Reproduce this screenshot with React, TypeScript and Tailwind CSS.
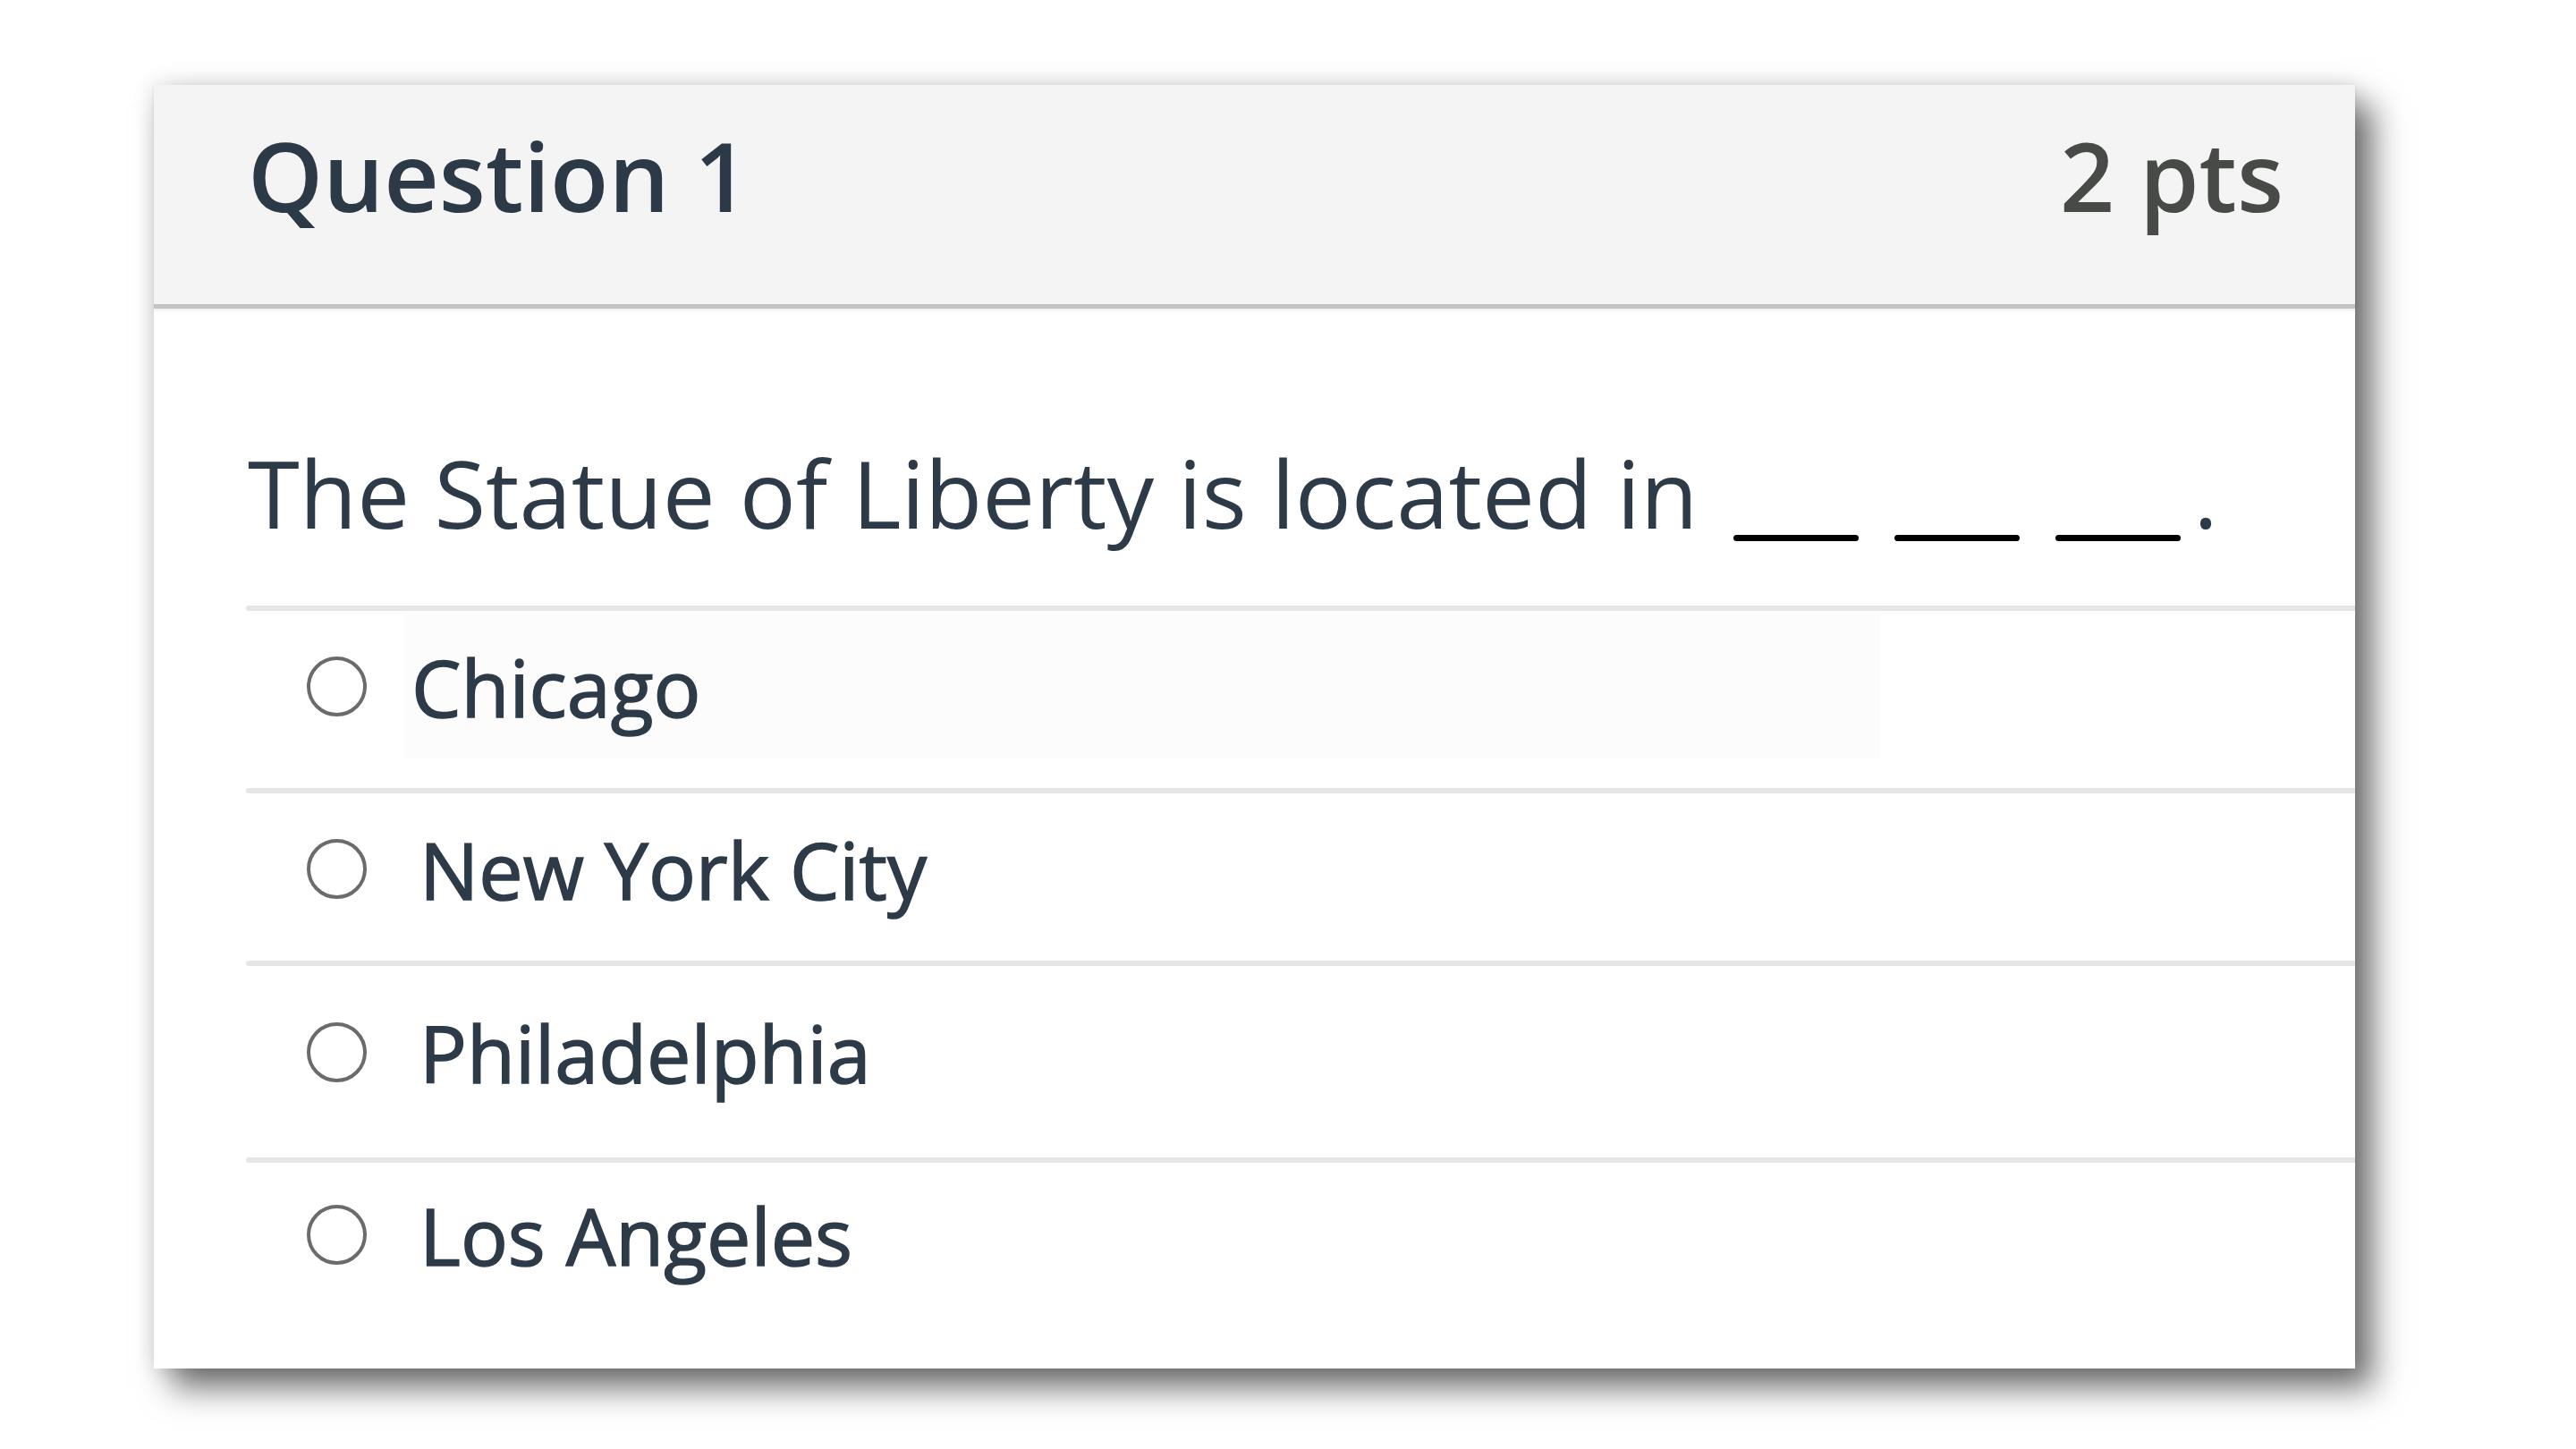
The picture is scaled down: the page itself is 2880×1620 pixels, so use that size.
import React from 'react';

interface Choice {
    label: string;
    rowClass: string;
    textClass: string;
    highlight?: boolean;
}

// row heights exclude the 6px divider on top
const choices: Choice[] = [
    { label: 'Chicago', rowClass: 'h-[198px] pt-[4px]', textClass: 'pl-[8px]', highlight: true },
    { label: 'New York City', rowClass: 'h-[187px] pt-[4px]', textClass: 'pl-[17px]' },
    { label: 'Philadelphia', rowClass: 'h-[214px] pt-[16px]', textClass: 'pl-[17px]' },
    { label: 'Los Angeles', rowClass: 'h-[230px] pt-0', textClass: 'pl-[17px]' },
];

const Blank = () => (
    <span className="inline-block align-baseline w-[140px] h-[7px] ml-[40px] -mb-[14px] rounded-full bg-black" />
);

const ChoiceRow = ({ choice }: { choice: Choice }) => (
    <li className="flex flex-col">
        <div className="h-[6px] shrink-0 rounded-l-full bg-[#e6e6e6]" />
        <label className={`flex items-start ${choice.rowClass}`}>
            <div className="h-[161px] ml-[68px] flex items-center">
                <span className="block w-[67px] h-[67px] rounded-full border-[4px] border-[#6b6b6b] bg-white" />
            </div>
            <div
                className={`h-[161px] w-[1651px] ml-[42px] flex items-center ${choice.textClass} ${
                    choice.highlight ? 'bg-[#fcfcfc]' : ''
                }`}
            >
                <span className="text-[88px] leading-none font-normal text-[#2d3b48] [-webkit-text-stroke:1.5px_#2d3b48]">
                    {choice.label}
                </span>
            </div>
        </label>
    </li>
);

export default function App() {
    return (
        <div className="min-h-screen bg-white pt-[95px] pl-[172px] font-['Open_Sans',sans-serif]">
            <div className="w-[2461px] h-[1435px] bg-white flex flex-col shadow-[0_0_24px_rgba(0,0,0,0.14),20px_22px_34px_rgba(0,0,0,0.55)]">
                {/* Header */}
                <div className="h-[250px] shrink-0 bg-[#f4f4f4] border-b-[5px] border-[#c4c4c4] flex items-start justify-between pl-[105px] pr-[80px] pt-[47px] shadow-[0_2px_3px_rgba(0,0,0,0.08)]">
                    <h2 className="text-[107px] leading-none font-semibold text-[#2c3a47]">Question 1</h2>
                    <span className="text-[107px] leading-none font-semibold text-[#474a47]">2 pts</span>
                </div>

                {/* Question */}
                <div className="pl-[105px] pt-[153px]">
                    <p className="text-[105px] leading-none text-[#2d3b48] whitespace-nowrap">
                        The Statue of Liberty is located in
                        <Blank />
                        <Blank />
                        <Blank />
                        <span className="ml-[14px]">.</span>
                    </p>
                </div>

                {/* Answers */}
                <ul className="ml-[103px] mt-[74px] flex flex-col">
                    {choices.map((c) => (
                        <ChoiceRow key={c.label} choice={c} />
                    ))}
                </ul>
            </div>
        </div>
    );
}
